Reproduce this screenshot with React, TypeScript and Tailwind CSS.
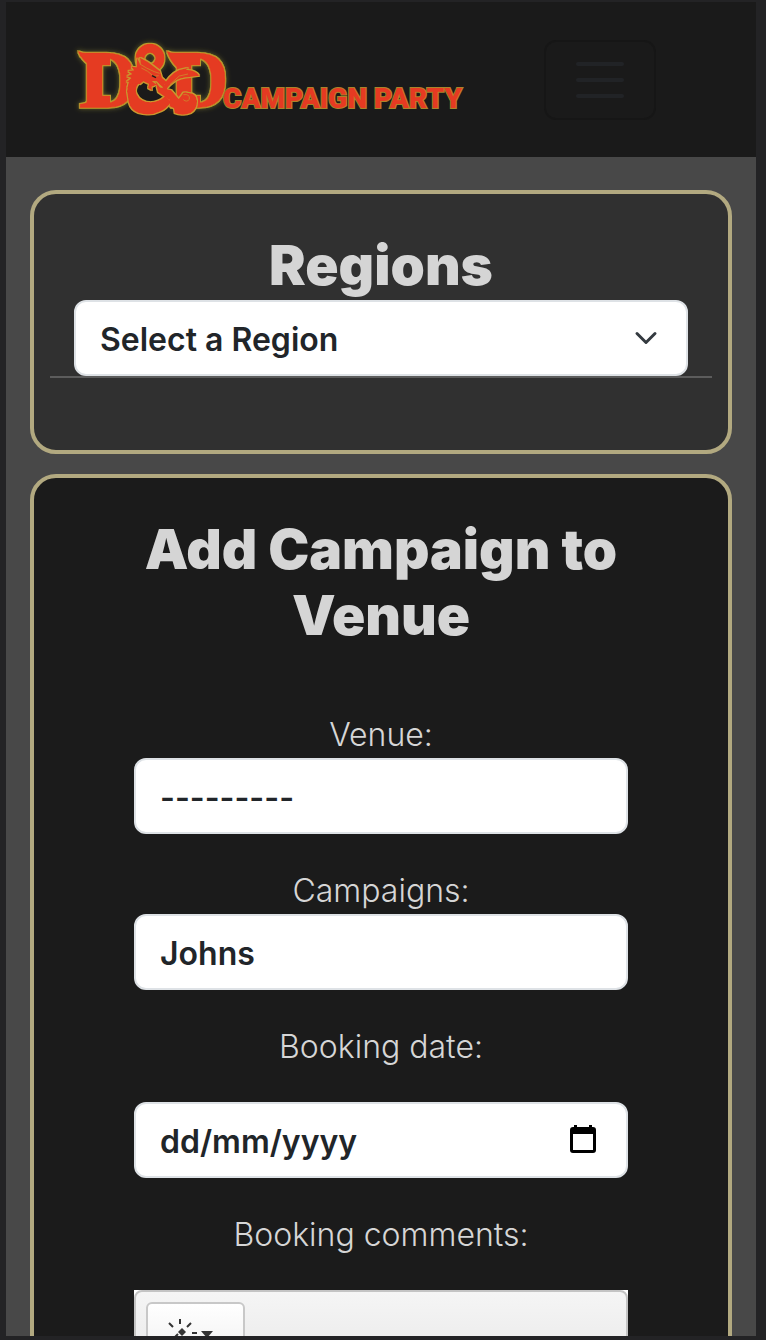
import { useState, type ReactNode } from "react";

function Emblem() {
  return (
    <svg viewBox="51 30 438 240" className="h-20 w-[146px] shrink-0 overflow-visible" role="img" aria-label="D&D">
      <defs>
        <filter id="gilded" x="-20%" y="-20%" width="140%" height="140%">
          <feMorphology in="SourceAlpha" operator="dilate" radius="2" result="fat" />
          <feFlood floodColor="#b99a2c" />
          <feComposite in2="fat" operator="in" result="gold" />
          <feGaussianBlur in="fat" stdDeviation="8" result="soft" />
          <feFlood floodColor="#a8a43a" floodOpacity="0.5" />
          <feComposite in2="soft" operator="in" result="halo" />
          <feMerge>
            <feMergeNode in="halo" />
            <feMergeNode in="gold" />
            <feMergeNode in="SourceGraphic" />
          </feMerge>
        </filter>
        <filter id="edged" x="-10%" y="-10%" width="120%" height="120%">
          <feMorphology in="SourceAlpha" operator="dilate" radius="2" result="fat" />
          <feFlood floodColor="#c79a2e" />
          <feComposite in2="fat" operator="in" result="gold" />
          <feMerge>
            <feMergeNode in="gold" />
            <feMergeNode in="SourceGraphic" />
          </feMerge>
        </filter>
      </defs>
      <g fill="#e53a22" filter="url(#gilded)">
        <g stroke="#e53a22" strokeWidth="2" fontSize="246" fontWeight="700" className="font-['Liberation_Serif',serif]">
          <text x="56" y="231">D</text>
          <text x="329" y="231">D</text>
        </g>
        <path d="M53 63Q66 70 84 70H150V106H127V197H150V231H60L84 214V102Q66 90 53 63Z" />
        <path d="M320 63Q334 70 350 70H420V106H394V197H420V231H350V112Q330 92 320 63Z" />
        <circle cx="270" cy="85" r="30" fill="none" stroke="#e53a22" strokeWidth="27" />
      </g>
      <g fill="#e53a22" filter="url(#edged)">
        <path d="M207 151L201 184Q204 200 206 216Q212 240 236 249Q270 260 302 244Q320 235 334 215L316 198Q298 216 272 217Q240 216 230 193Q222 174 240 156L260 150Z" />
        <path d="M231 84L242 104L240 83L264 96L300 124L306 143L321 157L312 165L314 176L300 164L290 154L276 153L290 164L275 170L276 181L264 174L267 162L250 154L239 163L228 159L222 171L216 158L201 176L208 155L199 157L214 144L201 139L216 132L204 123L222 121L214 110L230 112Z" />
        <path d="M286 154L300 172L334 181L356 207L366 194Q370 183 384 189Q408 188 411 212Q412 236 392 249Q368 260 344 249L342 235L329 229L330 211L294 186Z" />
        <path d="M307 174Q326 134 357 120L385 113L378 120Q406 119 418 137L389 141Q358 142 340 157Q324 168 318 182Z" />
      </g>
      <g fill="none" stroke="#c79a2e" strokeWidth="2">
        <path d="M238 101Q260 116 283 125L299 130M244 114L263 124L281 139L296 137M330 163L358 138L384 132M370 194Q391 191 388 208Q380 218 370 209" />
        <path d="M276 137L288 143" stroke="#1a1a1a" strokeWidth="4" />
      </g>
    </svg>
  );
}

function Card({ tone, children }: { tone: string; children: ReactNode }) {
  return <section className={`rounded-[26px] border-4 border-[#b2a980] pt-[38px] ${tone}`}>{children}</section>;
}

const heading = "pb-0.5 text-center font-['Inter',sans-serif] text-[55px] leading-[66px] font-black text-[#d5d5d5]";
const label = "block pt-px text-center text-[32px] leading-[47px] font-light text-[#d6d6d6]";
const control =
  "block h-[76px] w-full appearance-none rounded-xl border-2 border-[#dee2e6] bg-white px-6 pt-[3px] text-[32px] font-semibold text-[#212529] placeholder:text-[#212529] placeholder:opacity-100";

export default function App() {
  const [date, setDate] = useState("");

  return (
    <div className="flex h-screen flex-col bg-[#232325] pt-0.5 pr-2.5 pb-1 pl-1.5 font-['Inter',sans-serif]">
      <div className="min-h-0 grow overflow-y-auto bg-[#484848] [scrollbar-width:none]">
        <header className="flex items-start justify-between bg-[#1a1a1a] pt-[38px] pr-[100px] pb-[37px] pl-[71px]">
          <a href="#home" className="flex items-end">
            <Emblem />
            <span className="mb-[7px] font-['Roboto',sans-serif] text-[28px] leading-7 font-black whitespace-nowrap text-[#e53a22] [-webkit-text-stroke:2px_#a8842a] [paint-order:stroke_fill]">
              CAMPAIGN PARTY
            </span>
          </a>
          <button
            type="button"
            aria-label="Toggle navigation"
            className="flex h-20 w-28 shrink-0 flex-col items-center justify-center gap-3 rounded-xl border-2 border-[#161616]"
          >
            <span className="h-1 w-12 rounded-full bg-[#212326]" />
            <span className="h-1 w-12 rounded-full bg-[#212326]" />
            <span className="h-1 w-12 rounded-full bg-[#212326]" />
          </button>
        </header>

        <main className="flex flex-col gap-5 px-6 pt-[33px] pb-6">
          <Card tone="bg-[#303030] px-4 pb-[72px]">
            <h2 className={heading}>
              <label htmlFor="region">Regions</label>
            </h2>
            <div className="mx-6 grid items-center">
              <select id="region" className={`${control} col-start-1 row-start-1`}>
                <option>Select a Region</option>
              </select>
              <svg
                viewBox="0 0 16 16"
                className="pointer-events-none col-start-1 row-start-1 mr-[30px] size-6 justify-self-end"
                fill="none"
                stroke="#343a40"
                strokeWidth="2"
                strokeLinecap="round"
                strokeLinejoin="round"
              >
                <path d="m2 5 6 6 6-6" />
              </svg>
            </div>
            <hr className="border-t-2 border-[#5c5c5c]" />
          </Card>

          <Card tone="bg-[#1b1b1b] px-[100px] pb-10">
            <h2 className={`${heading} -mx-6`}>Add Campaign to Venue</h2>
            <form className="mt-[60px] flex flex-col gap-8">
              <div>
                <label htmlFor="venue" className={label}>Venue:</label>
                <select id="venue" className={control}>
                  <option>---------</option>
                </select>
              </div>
              <div>
                <label htmlFor="campaigns" className={label}>Campaigns:</label>
                <select id="campaigns" className={control}>
                  <option>Johns</option>
                </select>
              </div>
              <label htmlFor="date" className={label}>Booking date:</label>
              <div className="grid items-center">
                <input
                  id="date"
                  type="text"
                  placeholder="dd/mm/yyyy"
                  value={date}
                  onChange={(e) => setDate(e.target.value)}
                  className={`${control} col-start-1 row-start-1`}
                />
                <button
                  type="button"
                  aria-label="Open calendar"
                  className="col-start-1 row-start-1 mr-8 pb-0.5 justify-self-end"
                >
                  <svg viewBox="0 0 26 28" className="h-7 w-[26px]">
                    <path
                      fillRule="evenodd"
                      d="M4 0h3v2h12V0h3v2h1q3 0 3 3v20q0 3-3 3H3q-3 0-3-3V5q0-3 3-3h1ZM3 9v16h20V9Z"
                    />
                  </svg>
                </button>
              </div>
              <label htmlFor="comments" className={label}>Booking comments:</label>
              <div className="bg-white">
                <div className="rounded-lg border-2 border-[#c4c4c4] bg-linear-to-b from-[#f5f5f5] to-[#e8e8e8] p-2.5">
                  <button
                    type="button"
                    aria-label="Style"
                    className="flex h-[60px] w-[99px] items-start rounded-md border-2 border-[#c8c8c8] bg-linear-to-b from-white to-[#f0f0f0] pt-3 pl-5"
                  >
                    <svg viewBox="0 0 48 32" className="h-8 w-12" fill="none" stroke="#333" strokeWidth="2">
                      <path d="M12 3v5M1 7l4 4M23 7l-4 4M24 17h5M1 27l9-9" />
                      <path d="m14 12 4 4-4 4-4-4Z" fill="#333" stroke="none" />
                      <path d="M33 15h12l-6 7Z" fill="#333" stroke="none" />
                    </svg>
                  </button>
                </div>
                <textarea id="comments" rows={5} className="block w-full bg-white p-4 text-[32px] text-[#212529]" />
              </div>
            </form>
          </Card>
        </main>
      </div>
    </div>
  );
}
